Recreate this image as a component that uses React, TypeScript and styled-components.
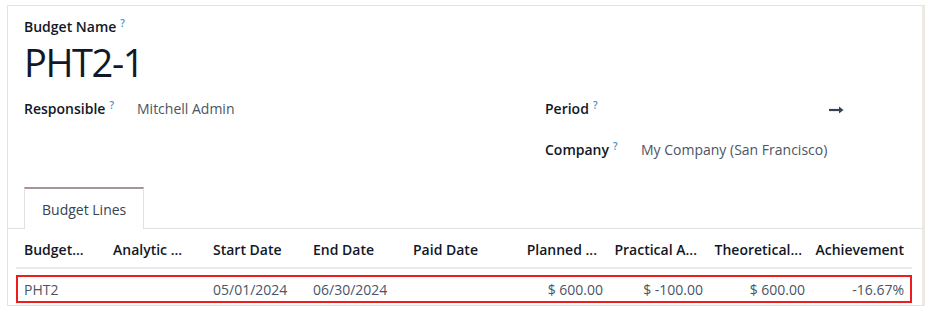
import * as React from 'react';
import styled, { createGlobalStyle } from 'styled-components';

const GlobalStyle = createGlobalStyle`
  html, body {
    margin: 0;
    padding: 0;
    background: #ffffff;
  }
  body {
    font-family: "Open Sans", "Noto Sans", sans-serif;
    font-size: 14px;
    color: #374151;
  }
`;

const Page = styled.div`
  width: 929px;
  height: 312px;
  padding: 5px 4px 0 7px;
  box-sizing: border-box;
`;

const Sheet = styled.div`
  border: 1px solid #e6e3dd;
  border-right: 3px solid #ece9e3;
  height: 301px;
  box-sizing: border-box;
  background: #fff;
`;

const Head = styled.div`
  padding: 12px 16px 0 16px;
`;

const TitleLabel = styled.div`
  line-height: 18px;
  height: 18px;
`;

const FieldLabel = styled.span`
  font-weight: 600;
  color: #111827;
  font-size: 14px;
  line-height: 18px;
  white-space: nowrap;
`;

const Help = styled.sup`
  color: #3f8fc4;
  font-weight: 600;
  font-size: 10px;
  margin-left: 4px;
  vertical-align: top;
  position: relative;
  top: -4px;
`;

const Title = styled.h1`
  margin: 0;
  font-size: 38px;
  font-weight: 400;
  letter-spacing: -1.4px;
  line-height: 52px;
  color: #111827;
`;

const Groups = styled.div`
  display: grid;
  grid-template-columns: 521px 1fr;
  margin-top: 11px;
`;

const Group = styled.div`
  display: flex;
  flex-direction: column;
  gap: 21px;
`;

const Row = styled.div<{ $labelWidth: number }>`
  display: grid;
  grid-template-columns: ${(p) => p.$labelWidth}px 1fr;
  align-items: center;
  height: 20px;
`;

const Value = styled.span`
  color: #4b5563;
  line-height: 20px;
  white-space: nowrap;
`;

const DateRange = styled.div`
  display: flex;
  align-items: center;
  padding: 2px 0 0 188px;
`;

const Notebook = styled.div`
  margin-top: 27px;
`;

const TabList = styled.div`
  display: flex;
  padding-left: 16px;
  border-bottom: 1px solid #dee2e6;
`;

const Tab = styled.div<{ $active?: boolean }>`
  height: 42px;
  padding: 0 17px;
  display: flex;
  align-items: center;
  box-sizing: border-box;
  border: 1px solid #dee2e6;
  border-top: 2px solid ${(p) => (p.$active ? '#a8929f' : '#dee2e6')};
  border-bottom: none;
  margin-bottom: -1px;
  background: #fff;
  color: #374151;
  position: relative;
  &::after {
    content: "";
    position: absolute;
    left: 0;
    right: 0;
    bottom: -1px;
    height: 1px;
    background: #fff;
  }
`;

const Table = styled.div`
  padding: 0 10px 0 8px;
`;

const cols = '89px 100px 100px 100px 100px 106px 100px 102px 99px';

const HeaderRow = styled.div`
  display: grid;
  grid-template-columns: ${cols};
  height: 40px;
  padding-top: 3px;
  align-items: center;
  border-bottom: 2px solid #e9ebee;
  box-sizing: border-box;
`;

const HeadCell = styled.div<{ $right?: boolean; $padRight: number }>`
  padding: 0 ${(p) => p.$padRight}px 0 ${(p) => (p.$right ? 0 : 8)}px;
  font-weight: 600;
  color: #111827;
  white-space: nowrap;
  overflow: hidden;
  text-align: ${(p) => (p.$right ? 'right' : 'left')};
`;

const DataRow = styled.div`
  display: grid;
  grid-template-columns: ${cols};
  margin-top: 6px;
  height: 28px;
  align-items: center;
  outline: 2px solid #ee1c1c;
  outline-offset: -2px;
`;

const Cell = styled.div<{ $right?: boolean }>`
  padding: 0 8px;
  color: #4b5563;
  white-space: nowrap;
  text-align: ${(p) => (p.$right ? 'right' : 'left')};
`;

const Arrow = () => (
  <svg width="15" height="8" viewBox="0 0 15 8">
    <path d="M0 4h11" stroke="#374151" strokeWidth="2.2" />
    <path d="M10 0.5L14.5 4L10 7.5Z" fill="#374151" />
  </svg>
);

const headers: [string, boolean, number][] = [
  ['Budget...', false, 8],
  ['Analytic ...', false, 8],
  ['Start Date', false, 8],
  ['End Date', false, 8],
  ['Paid Date', false, 8],
  ['Planned ...', true, 14],
  ['Practical A...', true, 14],
  ['Theoretical...', true, 11],
  ['Achievement', true, 8],
];

const line: [string, boolean][] = [
  ['PHT2', false],
  ['', false],
  ['05/01/2024', false],
  ['06/30/2024', false],
  ['', false],
  ['$ 600.00', true],
  ['$ -100.00', true],
  ['$ 600.00', true],
  ['-16.67%', true],
];

const App = () => (
  <Page>
    <GlobalStyle />
    <Sheet>
      <Head>
        <TitleLabel>
          <FieldLabel>
            Budget Name
            <Help>?</Help>
          </FieldLabel>
        </TitleLabel>
        <Title>PHT2-1</Title>
        <Groups>
          <Group>
            <Row $labelWidth={113}>
              <FieldLabel>
                Responsible
                <Help>?</Help>
              </FieldLabel>
              <Value>Mitchell Admin</Value>
            </Row>
          </Group>
          <Group>
            <Row $labelWidth={96}>
              <FieldLabel>
                Period
                <Help>?</Help>
              </FieldLabel>
              <DateRange>
                <Arrow />
              </DateRange>
            </Row>
            <Row $labelWidth={96}>
              <FieldLabel>
                Company
                <Help>?</Help>
              </FieldLabel>
              <Value>My Company (San Francisco)</Value>
            </Row>
          </Group>
        </Groups>
      </Head>
      <Notebook>
        <TabList>
          <Tab $active>Budget Lines</Tab>
        </TabList>
        <Table>
          <HeaderRow>
            {headers.map(([h, r, pr]) => (
              <HeadCell key={h} $right={r} $padRight={pr}>{h}</HeadCell>
            ))}
          </HeaderRow>
          <DataRow>
            {line.map(([v, r], i) => (
              <Cell key={i} $right={r}>{v}</Cell>
            ))}
          </DataRow>
        </Table>
      </Notebook>
    </Sheet>
  </Page>
);

export default App;
